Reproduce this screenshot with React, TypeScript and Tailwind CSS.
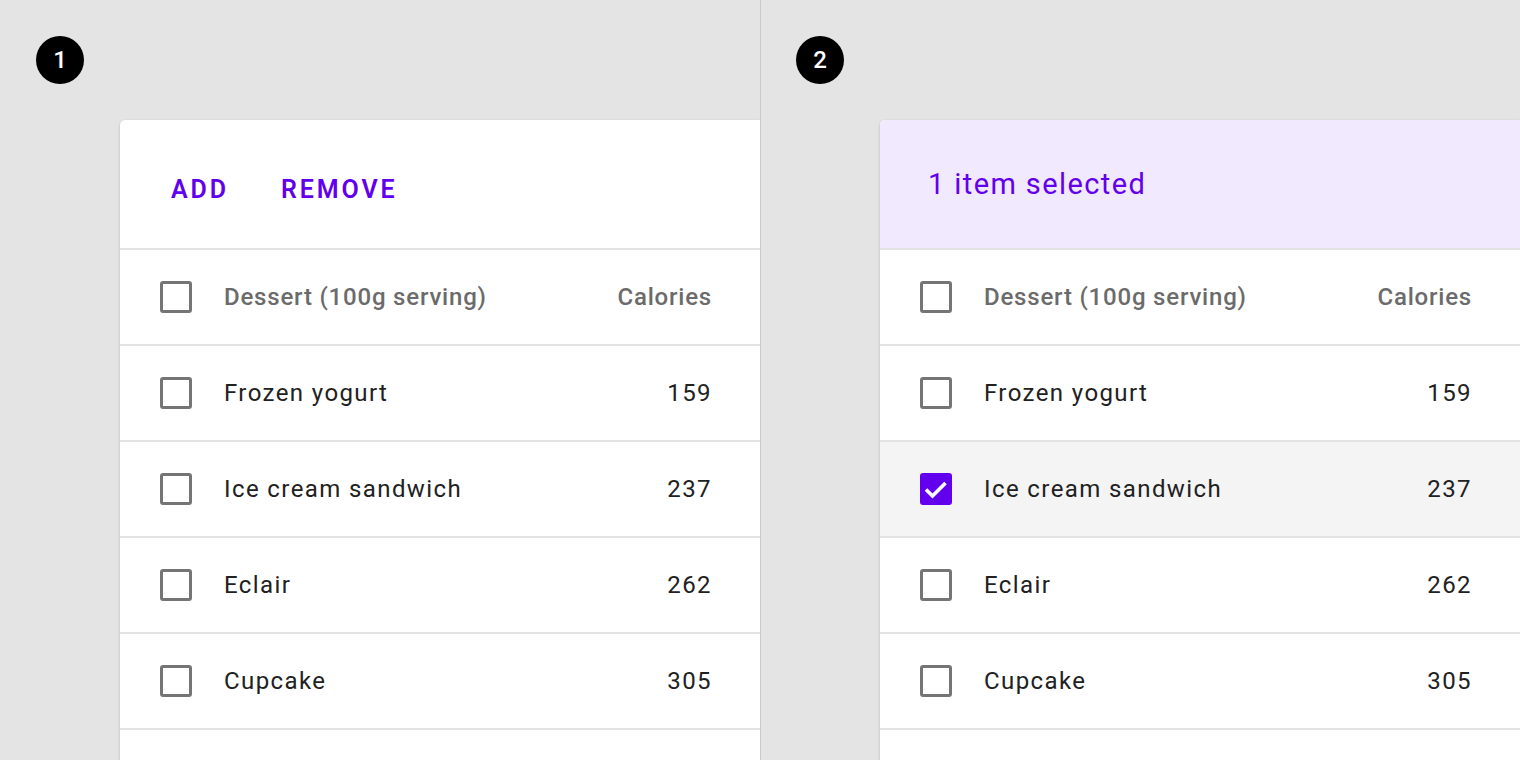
const rows = [
  { name: "Frozen yogurt", cal: 159 },
  { name: "Ice cream sandwich", cal: 237 },
  { name: "Eclair", cal: 262 },
  { name: "Cupcake", cal: 305 },
];

function Checkbox({ checked = false }: { checked?: boolean }) {
  if (checked) {
    return (
      <div className="w-[32px] h-[32px] rounded-[3px] bg-[#6200ee] flex items-center justify-center shrink-0">
        <svg width="32" height="32" viewBox="0 0 32 32">
          <path d="M6 16.5l6.5 6.5L25.5 10" fill="none" stroke="#fff" strokeWidth="3.6" />
        </svg>
      </div>
    );
  }
  return <div className="w-[32px] h-[32px] rounded-[3px] border-[3px] border-[#757575] shrink-0" />;
}

function Badge({ n }: { n: number }) {
  return (
    <div className="w-[48px] h-[48px] rounded-full bg-black text-white flex items-center justify-center text-[24px] font-medium">
      {n}
    </div>
  );
}

function Table({ selected }: { selected: boolean }) {
  return (
    <div className="ml-[120px] mt-[36px] w-[640px] bg-white rounded-tl-[5px] shadow-[0_1px_3px_rgba(0,0,0,0.2)]">
      {selected ? (
        <div className="h-[128px] bg-[#f1e9fd] rounded-tl-[5px] flex items-center pl-[48px] pt-[2px] text-[29px] text-[#6200ee] tracking-[1.4px]">
          1 item selected
        </div>
      ) : (
        <div className="h-[128px] flex items-center pl-[51px] pt-[12px] gap-[52px] text-[25px] font-semibold text-[#6200ee] tracking-[2.9px]">
          <span>ADD</span>
          <span>REMOVE</span>
        </div>
      )}
      <div className="h-[96px] border-t-2 border-[#e3e3e3] flex items-center pl-[40px] pr-[49px] text-[24px] font-medium text-[#6b6b6b] tracking-[0.8px]">
        <Checkbox />
        <span className="ml-[32px] flex-1">Dessert (100g serving)</span>
        <span className="-mr-[1px]">Calories</span>
      </div>
      {rows.map((r, i) => {
        const on = selected && i === 1;
        return (
          <div
            key={r.name}
            className={`h-[96px] border-t-2 border-[#e3e3e3] flex items-center pl-[40px] pr-[48px] text-[24px] text-[#212121] tracking-[1.4px] ${on ? "bg-[#f4f4f4]" : ""}`}
          >
            <Checkbox checked={on} />
            <span className="ml-[32px] flex-1">{r.name}</span>
            <span>{r.cal}</span>
          </div>
        );
      })}
      <div className="h-[40px] border-t-2 border-[#e3e3e3]" />
    </div>
  );
}

export default function App() {
  return (
    <div className="w-[1520px] h-[760px] bg-[#e4e4e4] flex overflow-hidden font-['Roboto',sans-serif]">
      <div className="w-[760px] h-full overflow-hidden pt-[36px] pl-[36px] shrink-0">
        <Badge n={1} />
        <div className="-ml-[36px]">
          <Table selected={false} />
        </div>
      </div>
      <div className="w-px h-full bg-[#c9c9c9] shrink-0" />
      <div className="w-[759px] h-full overflow-hidden pt-[36px] pl-[35px] shrink-0">
        <Badge n={2} />
        <div className="-ml-[36px]">
          <Table selected={true} />
        </div>
      </div>
    </div>
  );
}
